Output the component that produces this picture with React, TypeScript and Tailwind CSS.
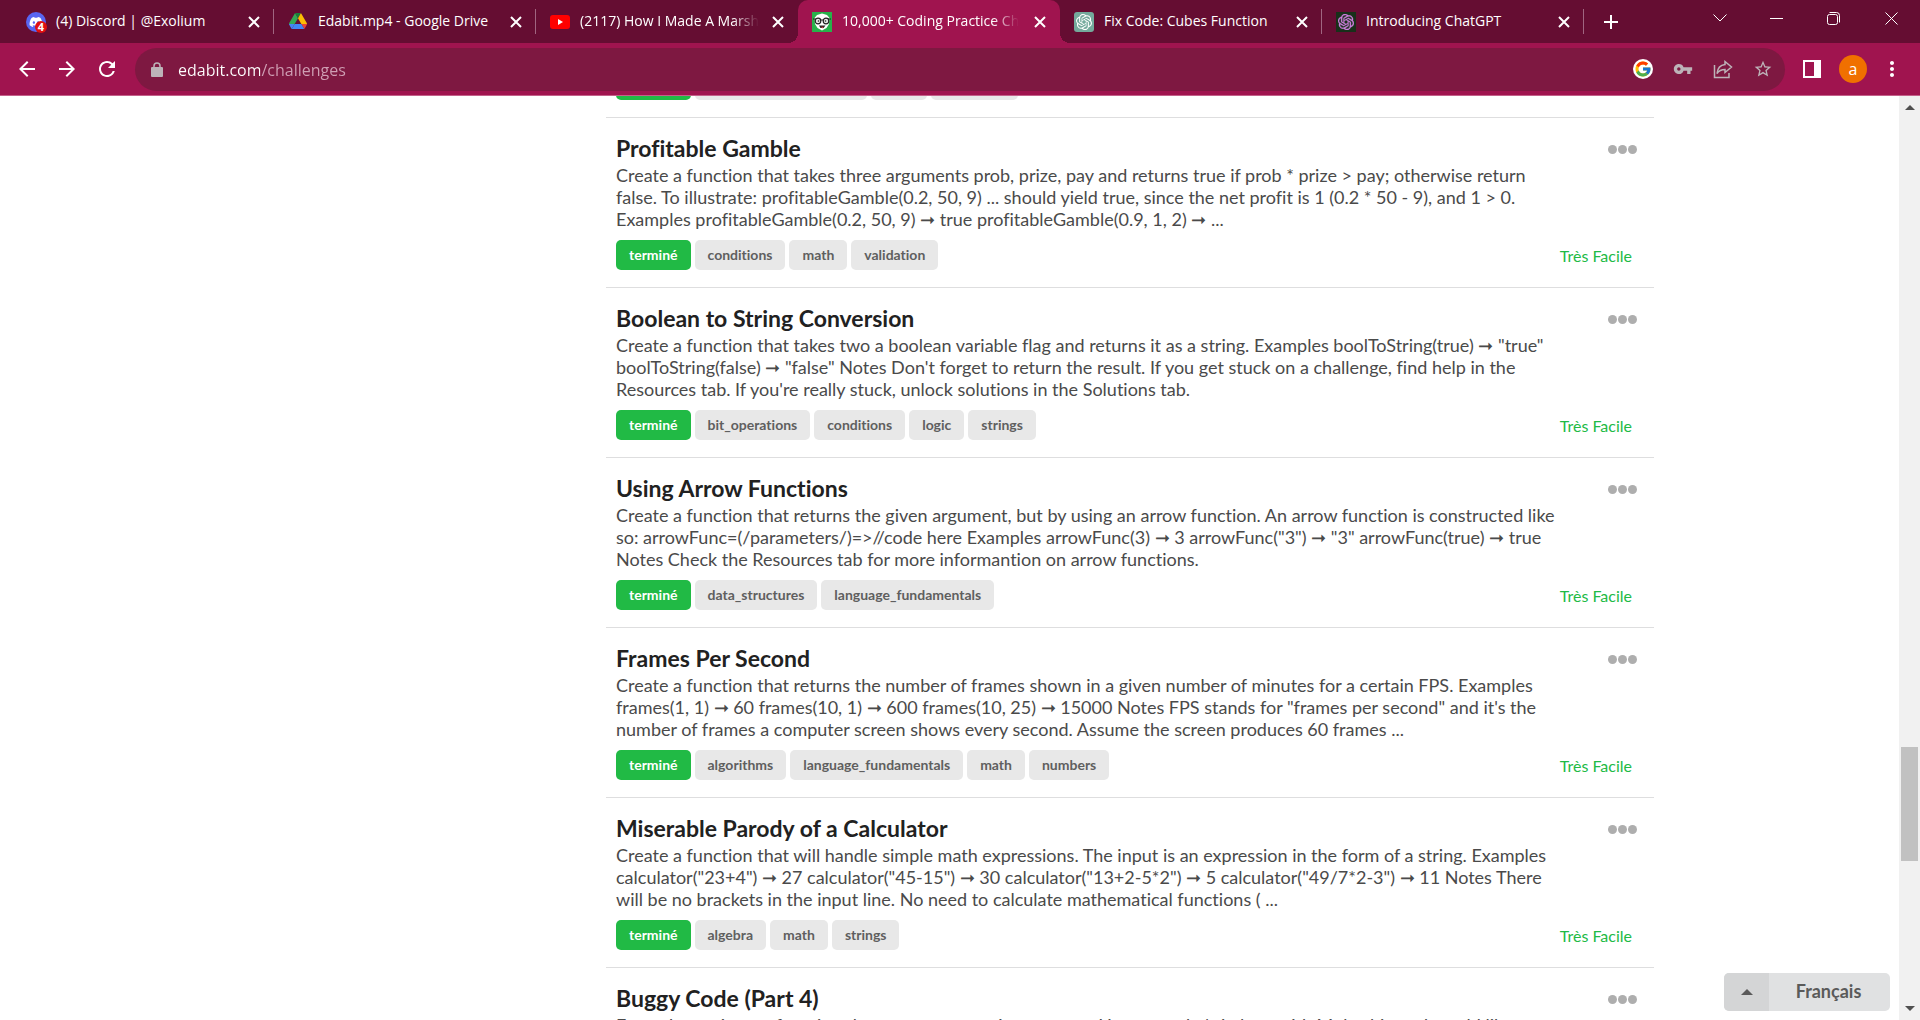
import React from "react";
import { FaDiscord } from "react-icons/fa";
import { FcGoogle } from "react-icons/fc";
import { SiOpenai } from "react-icons/si";
import { MdArrowBack, MdArrowForward, MdMoreVert, MdAdd, MdRefresh, MdStarBorder, MdVpnKey } from "react-icons/md";

type Challenge = { title: string; text: string; tags: string[] };

const challenges: Challenge[] = [
  {
    title: "Profitable Gamble",
    text: "Create a function that takes three arguments prob, prize, pay and returns true if prob * prize > pay; otherwise return\nfalse. To illustrate: profitableGamble(0.2, 50, 9) ... should yield true, since the net profit is 1 (0.2 * 50 - 9), and 1 > 0.\nExamples profitableGamble(0.2, 50, 9) ➞ true profitableGamble(0.9, 1, 2) ➞ ...",
    tags: ["conditions", "math", "validation"],
  },
  {
    title: "Boolean to String Conversion",
    text: "Create a function that takes two a boolean variable flag and returns it as a string. Examples boolToString(true) ➞ \"true\"\nboolToString(false) ➞ \"false\" Notes Don't forget to return the result. If you get stuck on a challenge, find help in the\nResources tab. If you're really stuck, unlock solutions in the Solutions tab.",
    tags: ["bit_operations", "conditions", "logic", "strings"],
  },
  {
    title: "Using Arrow Functions",
    text: "Create a function that returns the given argument, but by using an arrow function. An arrow function is constructed like\nso: arrowFunc=(/parameters/)=>//code here Examples arrowFunc(3) ➞ 3 arrowFunc(\"3\") ➞ \"3\" arrowFunc(true) ➞ true\nNotes Check the Resources tab for more informantion on arrow functions.",
    tags: ["data_structures", "language_fundamentals"],
  },
  {
    title: "Frames Per Second",
    text: "Create a function that returns the number of frames shown in a given number of minutes for a certain FPS. Examples\nframes(1, 1) ➞ 60 frames(10, 1) ➞ 600 frames(10, 25) ➞ 15000 Notes FPS stands for \"frames per second\" and it's the\nnumber of frames a computer screen shows every second. Assume the screen produces 60 frames ...",
    tags: ["algorithms", "language_fundamentals", "math", "numbers"],
  },
  {
    title: "Miserable Parody of a Calculator",
    text: "Create a function that will handle simple math expressions. The input is an expression in the form of a string. Examples\ncalculator(\"23+4\") ➞ 27 calculator(\"45-15\") ➞ 30 calculator(\"13+2-5*2\") ➞ 5 calculator(\"49/7*2-3\") ➞ 11 Notes There\nwill be no brackets in the input line. No need to calculate mathematical functions ( ...",
    tags: ["algebra", "math", "strings"],
  },
  {
    title: "Buggy Code (Part 4)",
    text: "Emmy has written a function that returns a greeting to users. However, she's in love with Mubashir, and would like",
    tags: [],
  },
];

function DiscordIcon() {
  return (
    <span className="relative flex size-5 items-center justify-center rounded-full bg-[#5865f2] text-white">
      <FaDiscord className="size-3.5" />
      <span className="absolute -right-px -bottom-px flex size-3 items-center justify-center rounded-full bg-[#e01010] text-[11px] leading-3 font-bold">4</span>
    </span>
  );
}

function DriveIcon() {
  return (
    <svg viewBox="0 0 87.3 78" className="w-[18px]" aria-hidden="true">
      <path fill="#4285f4" d="m6.6 66.85 3.85 6.65c.8 1.4 1.95 2.5 3.3 3.3L27.5 53H0c0 1.55.4 3.1 1.2 4.5z" />
      <path fill="#34a853" d="M43.65 25 29.9 1.2c-1.35.8-2.5 1.9-3.3 3.3L1.2 48.5C.4 49.9 0 51.45 0 53h27.5z" />
      <path fill="#ea4335" d="M73.55 76.8c1.35-.8 2.5-1.9 3.3-3.3l9.25-16c.8-1.4 1.2-2.95 1.2-4.5H59.8z" />
      <path fill="#188038" d="M43.65 25 57.4 1.2C56.05.4 54.5 0 52.9 0H34.4c-1.6 0-3.15.45-4.5 1.2z" />
      <path fill="#4285f4" d="M59.8 53H27.5L13.75 76.8c1.35.8 2.9 1.2 4.5 1.2h50.8c1.6 0 3.15-.45 4.5-1.2z" />
      <path fill="#fbbc04" d="m73.4 26.5-12.7-22c-.8-1.4-1.95-2.5-3.3-3.3L43.65 25 59.8 53h27.45c0-1.55-.4-3.1-1.2-4.5z" />
    </svg>
  );
}

function YoutubeIcon() {
  return (
    <svg viewBox="0 0 20 14" className="w-5" aria-hidden="true">
      <rect width="20" height="14" rx="3" fill="#f00" />
      <path d="M8 4v6l5-3z" fill="#fff" />
    </svg>
  );
}

function EdabitIcon() {
  return (
    <svg viewBox="0 0 20 20" className="size-5" aria-hidden="true">
      <rect width="20" height="20" fill="#27b14a" />
      <path d="M2.500 6 5 3l5-1.500L15 3l2.500 3-.5 6-2.500 4L10 18.500 5.500 16 3 12z" fill="#fff" />
      <g fill="#e6e9e7" stroke="#222" strokeWidth="1.200">
        <circle cx="6" cy="9" r="2.800" />
        <circle cx="14" cy="9" r="2.800" />
        <path d="M8.500 8h3M1 7h3M19 7h-3" />
      </g>
      <circle cx="6.500" cy="9" r=".8" fill="#222" />
      <circle cx="13.500" cy="9" r=".8" fill="#222" />
      <path d="M7 13.500h6.500L11.500 16h-3z" fill="#222" />
      <path d="M9 14.800h2.500L10.500 16.500z" fill="#d44" />
    </svg>
  );
}

const tabs = [
  { title: "(4) Discord | @Exolium", icon: <DiscordIcon /> },
  { title: "Edabit.mp4 - Google Drive", icon: <DriveIcon /> },
  { title: "(2117) How I Made A Marsh", icon: <YoutubeIcon />, faded: true },
  { title: "10,000+ Coding Practice Ch", icon: <EdabitIcon />, active: true, faded: true },
  {
    title: "Fix Code: Cubes Function",
    icon: (
      <span className="flex size-5 items-center justify-center rounded-[3px] bg-[#74aa9c] text-white">
        <SiOpenai className="size-4" />
      </span>
    ),
  },
  {
    title: "Introducing ChatGPT",
    icon: (
      <span className="flex size-5 items-center justify-center bg-[#18301a] text-[#d07fe0]">
        <SiOpenai className="size-4" stroke="currentColor" strokeWidth="0.5" />
      </span>
    ),
  },
];

function TabStrip() {
  return (
    <div className="flex h-[43px] bg-[#650d32] pl-3">
      {tabs.map((tab, i) => {
        const divided = !tab.active && i !== 2;
        return (
          <div
            key={tab.title}
            className={
              tab.active
                ? "relative flex w-[262px] items-center rounded-t-[10px] bg-[#a0144f] pr-2.5 pl-3.5"
                : "relative flex w-[262px] items-center pr-2.5 pl-3.5"
            }
          >
            {tab.active && (
              <>
                <span className="absolute bottom-0 -left-2.5 size-2.5 bg-[radial-gradient(circle_at_0_0,#650d32_10px,#a0144f_10px)]" />
                <span className="absolute -right-2.5 bottom-0 size-2.5 bg-[radial-gradient(circle_at_100%_0,#650d32_10px,#a0144f_10px)]" />
              </>
            )}
            <span className="flex w-5 shrink-0 justify-center">{tab.icon}</span>
            <button
              type="button"
              className={
                tab.faded
                  ? "ml-2.5 min-w-0 mask-r-from-85% pb-0.5 text-left text-[14px] leading-6 whitespace-nowrap text-white"
                  : "ml-2.5 min-w-0 pb-0.5 text-left text-[14px] leading-6 whitespace-nowrap text-white"
              }
            >
              {tab.title}
            </button>
            <button type="button" aria-label="Close tab" className="ml-auto flex size-5 shrink-0 items-center justify-center text-white">
              <svg viewBox="0 0 12 12" className="size-3" fill="none" stroke="currentColor" strokeWidth="2" aria-hidden="true"><path d="m1 1 10 10M11 1 1 11" /></svg>
            </button>
            {divided && <span className="absolute top-[9px] right-0 h-[25px] w-px bg-[#a06580]" />}
          </div>
        );
      })}
      <button type="button" aria-label="New tab" className="ml-[15px] flex w-6 items-center justify-center text-white">
        <MdAdd className="size-6" />
      </button>
      <div className="ml-auto flex h-9 text-white">
        <button type="button" aria-label="Search tabs" className="flex w-[57px] items-center justify-center">
          <svg viewBox="0 0 14 8" className="w-3.5" fill="none" stroke="currentColor" aria-hidden="true"><path d="m.5.5 6.500 6.500 6.500-6.500" /></svg>
        </button>
        <button type="button" aria-label="Minimize" className="flex w-[57px] items-center justify-center">
          <span className="h-px w-[13px] bg-white" />
        </button>
        <button type="button" aria-label="Restore" className="flex w-[57px] items-center justify-center">
          <svg viewBox="0 0 13 13" className="w-[13px]" fill="none" stroke="currentColor" aria-hidden="true">
            <rect x=".5" y="2.500" width="10" height="10" rx="2" />
            <path d="M2.500.5h7a3 3 0 0 1 3 3v7" />
          </svg>
        </button>
        <button type="button" aria-label="Close window" className="flex w-[58px] items-center justify-center">
          <svg viewBox="0 0 13 13" className="w-[13px]" fill="none" stroke="currentColor" aria-hidden="true"><path d="m.5.5 12 12M12.500.5l-12 12" /></svg>
        </button>
      </div>
    </div>
  );
}

function Toolbar() {
  return (
    <div className="flex h-[53px] items-center border-b border-[#c4608a] bg-[#a0144f] text-white">
      <div className="flex w-[135px] shrink-0 gap-4 pl-[15px]">
        <button type="button" aria-label="Back"><MdArrowBack className="size-6" /></button>
        <button type="button" aria-label="Forward"><MdArrowForward className="size-6" /></button>
        <button type="button" aria-label="Reload"><MdRefresh className="size-6" /></button>
      </div>
      <div className="flex h-[43px] min-w-0 flex-1 items-center rounded-full bg-[#7e1841] pr-3 pl-4 text-[#bdb3b8]">
        <svg viewBox="0 0 12 15" className="w-3 shrink-0" aria-hidden="true">
          <rect y="5" width="12" height="10" rx="1" fill="currentColor" />
          <path d="M3 6V4a3 3 0 0 1 6 0v2" fill="none" stroke="currentColor" strokeWidth="1.500" />
        </svg>
        <input
          type="text"
          aria-label="Address"
          defaultValue="edabit.com/challenges"
          className="ml-[15px] min-w-0 flex-1 bg-[linear-gradient(90deg,#fff_82px,#cf9fb4_82px)] bg-clip-text pt-0.5 text-[16px] leading-6 text-white outline-none [-webkit-text-fill-color:transparent]"
        />
        <div className="flex items-center gap-5">
          <button type="button" aria-label="Google" className="flex size-5 items-center justify-center rounded-full bg-white"><FcGoogle className="size-[18px]" /></button>
          <button type="button" aria-label="Passwords"><MdVpnKey className="size-5" /></button>
          <button type="button" aria-label="Share">
            <svg viewBox="0 0 20 20" className="size-5" fill="none" stroke="currentColor" strokeWidth="1.500" aria-hidden="true">
              <path d="M1.500 6v12.500H16V14" />
              <path d="M12 2.500 18.500 8 12 13.500v-3c-4 0-6 1-8 4 .5-5 3-8.500 8-9z" />
            </svg>
          </button>
          <button type="button" aria-label="Bookmark"><MdStarBorder className="size-5" /></button>
        </div>
      </div>
      <div className="flex w-[135px] shrink-0 items-center pl-[18px]">
        <button type="button" aria-label="Side panel">
          <svg viewBox="0 0 18 18" className="w-[18px]" aria-hidden="true"><path fillRule="evenodd" fill="currentColor" d="M0 0h18v18H0zM2 2v14h9V2z" /></svg>
        </button>
        <button type="button" aria-label="Profile" className="ml-[18px] size-7 rounded-full bg-[#f07000] text-[16px] leading-6">a</button>
        <button type="button" aria-label="Menu" className="ml-[13px]"><MdMoreVert className="size-6" /></button>
      </div>
    </div>
  );
}

function Tags({ tags }: { tags: string[] }) {
  return (
    <div className="flex gap-1 text-[14px] leading-[30px] font-bold">
      {["terminé", ...tags].map((tag, i) => (
        <a
          key={tag}
          href="#"
          className={i === 0 ? "rounded-[5px] bg-[#21ba45] px-[13px] text-white" : "rounded-[5px] bg-[#e8e8e8] px-[13px] text-[#5f5f5f]"}
        >
          {tag}
        </a>
      ))}
    </div>
  );
}

function Row({ item }: { item: Challenge }) {
  return (
    <li className="h-[170px] border-t border-[#dededf] px-2.5 pt-4">
      <div className="flex h-[30px] items-start justify-between pr-1.5">
        <h2 className="text-[23px] leading-7 font-bold text-[#212121]"><a href="#">{item.title}</a></h2>
        <button type="button" aria-label="More options" className="flex gap-px pt-[11px] pr-px">
          <span className="size-[9px] rounded-full bg-[#aeaeae]" />
          <span className="size-[9px] rounded-full bg-[#aeaeae]" />
          <span className="size-[9px] rounded-full bg-[#aeaeae]" />
        </button>
      </div>
      <p className="text-[18px] leading-[22px] whitespace-pre text-[#4a4a4a]">{item.text}</p>
      {item.tags.length > 0 && (
        <div className="mt-2.5 flex items-center justify-between pr-3">
          <Tags tags={item.tags} />
          <span className="pt-0.5 text-[16px] leading-6 text-[#21ba45]">Très Facile</span>
        </div>
      )}
    </li>
  );
}

export default function App() {
  return (
    <div className="flex h-screen flex-col overflow-hidden bg-white font-['Open_Sans',sans-serif]">
      <header>
        <TabStrip />
        <Toolbar />
      </header>
      <div className="flex min-h-0 flex-1 font-[Lato,sans-serif] [font-variant-ligatures:none]">
        <div className="relative min-w-0 flex-1 overflow-hidden">
          <main className="mx-auto w-full max-w-[1409px] pl-[361px]">
            <ul>
              <li className="flex h-[21px] flex-col justify-end overflow-hidden px-2.5 pb-[17px]">
                <Tags tags={["language_fundamentals", "logic", "validation"]} />
              </li>
              {challenges.map((item) => (
                <Row key={item.title} item={item} />
              ))}
            </ul>
          </main>
          <button
            type="button"
            className="absolute right-[9px] bottom-[9px] flex h-[38px] overflow-hidden rounded-[5px] bg-[#e0e1e2] text-[18px] leading-9 font-bold text-[#5a5a5a]"
          >
            <span className="flex h-full w-[45px] items-center justify-center bg-[#d4d5d6]">
              <svg viewBox="0 0 12 6" className="w-3" aria-hidden="true"><path d="M0 6 6 0l6 6z" fill="currentColor" /></svg>
            </span>
            <span className="w-[121px] pr-0.5 text-center">Français</span>
          </button>
        </div>
        <div className="flex w-[21px] shrink-0 flex-col items-center bg-[#f1f1f1] text-[#505050]" aria-hidden="true">
          <svg viewBox="0 0 10 5" className="mt-[9px] w-2.5"><path d="M0 5 5 0l5 5z" fill="currentColor" /></svg>
          <div className="flex-[637]" />
          <div className="w-[17px] flex-[114] bg-[#c1c1c1]" />
          <div className="flex-[145]" />
          <svg viewBox="0 0 10 5" className="mb-[9px] w-2.5"><path d="m0 0 5 5 5-5z" fill="currentColor" /></svg>
        </div>
      </div>
    </div>
  );
}
